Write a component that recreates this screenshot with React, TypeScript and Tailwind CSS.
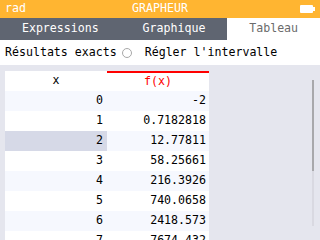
const rows: [string, string][] = [
  ["0", "-2"],
  ["1", "0.7182818"],
  ["2", "12.77811"],
  ["3", "58.25661"],
  ["4", "216.3926"],
  ["5", "740.0658"],
  ["6", "2418.573"],
  ["7", "7674.432"],
];

const App = () => {
  return (
    <div className="w-[320px] h-[240px] overflow-hidden flex flex-col font-['DejaVu_Sans_Mono',monospace] text-[11.6px] leading-none">
      {/* Title bar */}
      <div className="h-[18px] shrink-0 bg-[#ffb531] text-white grid grid-cols-3 items-center">
        <span className="pl-[5px]">rad</span>
        <span className="text-center">GRAPHEUR</span>
        <div className="flex justify-end items-center pr-[5px]">
          <div className="w-[13px] h-[8px] bg-white rounded-[1px]" />
          <div className="w-[2px] h-[4px] bg-white" />
        </div>
      </div>

      {/* Tabs */}
      <div className="h-[22px] shrink-0 flex bg-[#5f6571] text-white">
        <div className="grow flex items-center justify-center">Expressions</div>
        <div className="grow flex items-center justify-center">Graphique</div>
        <div className="grow flex items-center justify-center bg-white text-[#6b6b6b]">Tableau</div>
      </div>

      {/* Options */}
      <div className="h-[25px] shrink-0 bg-white flex items-center pl-[5px] text-black">
        <span>Résultats exacts</span>
        <span className="ml-[5px] w-[10px] h-[10px] rounded-full border border-[#a8a8a8]" />
        <span className="ml-[13px]">Régler l'intervalle</span>
      </div>

      {/* Table area */}
      <div className="flex-1 min-h-0 overflow-hidden bg-[#e5e6ee] flex">
        <div className="ml-[5px] mt-[6px] w-[204px] flex flex-col text-black">
          <div className="grid grid-cols-[102px_102px] h-[20px] shrink-0 bg-white">
            <div className="flex items-center justify-center">x</div>
            <div className="flex items-center justify-center border-t-2 border-[#ff0000] text-[#ff0000]">f(x)</div>
          </div>
          {rows.map(([x, y], i) => {
            const light = i % 2 === 0;
            const rowBg = light ? "bg-[#f6f8fe]" : "bg-white";
            return (
              <div key={x} className="grid grid-cols-[102px_102px] h-[20px] shrink-0">
                <div className={`flex items-center justify-end pr-[4px] ${i === 2 ? "bg-[#d6d9e7]" : rowBg}`}>{x}</div>
                <div className={`flex items-center justify-end pr-[3px] ${rowBg}`}>{y}</div>
              </div>
            );
          })}
        </div>
        <div className="flex-1" />
        <div className="mr-[6px] mt-[15px] w-[2px] h-[146px] flex flex-col shrink-0">
          <div className="h-[91px] bg-[#a8a8ab]" />
          <div className="flex-1 bg-[#d9d9e1]" />
        </div>
      </div>
    </div>
  );
};

export default App;
